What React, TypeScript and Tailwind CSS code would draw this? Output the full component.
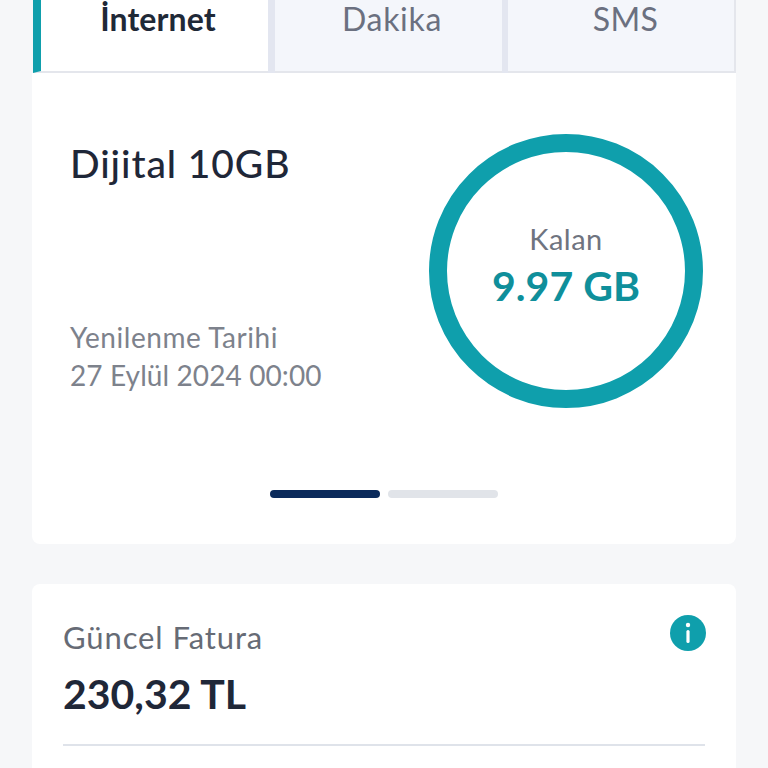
export default function App() {
  return (
    <div className="h-[768px] w-[768px] overflow-hidden bg-[#f6f7f9] px-8 font-['Lato','Inter',sans-serif]">
      {/* Tabs */}
      <div className="flex h-[73px] pl-px text-[32px] leading-[38px]">
        <div className="flex w-[235px] justify-center border-b-2 border-l-[8px] border-[#e4e6ec] border-l-[#0f9fac] bg-white pl-[7px] font-bold tracking-[0.1px] text-[#1f2937]">
          İnternet
        </div>
        <div className="w-[7px] bg-[#e3e6f0]" />
        <div className="flex w-[227px] justify-center border-b-2 border-[#e4e6ec] bg-[#f4f6fb] pl-[7px] tracking-[0.7px] text-[#6b7080]">
          Dakika
        </div>
        <div className="w-[6px] bg-[#e3e6f0]" />
        <div className="flex w-[228px] justify-center border-r-2 border-b-2 border-[#e4e6ec] bg-[#f4f6fb] pl-[9px] tracking-[0.4px] text-[#6b7080]">
          SMS
        </div>
      </div>

      {/* Paket */}
      <div className="h-[471px] rounded-b-lg bg-white">
        <div className="flex justify-between pr-[33px] pl-[38px]">
          <div>
            <h2 className="mt-[65px] text-[39px] leading-[50px] font-medium tracking-[0.9px] text-[#1f2738]">Dijital 10GB</h2>
            <div className="mt-[130px] text-[28px] leading-[38px] text-[#7d828c]">
              <p className="tracking-[0.55px]">Yenilenme Tarihi</p>
              <p className="tracking-[0.1px]">27 Eylül 2024 00:00</p>
            </div>
          </div>
          <div className="relative mt-[61px] h-[274px] w-[274px]">
            <svg viewBox="0 0 274 274" className="h-full w-full">
              <circle cx="137" cy="137" r="128" fill="none" stroke="#0f9fac" strokeWidth="18" />
            </svg>
            <div className="absolute inset-0 flex flex-col items-center pt-[87px]">
              <span className="text-[29px] leading-[36px] tracking-[0.5px] text-[#6f7480]">Kalan</span>
              <span className="mt-[4px] text-[41px] leading-[50px] font-bold text-[#0f8f9b]">9.97 GB</span>
            </div>
          </div>
        </div>
        <div className="mt-[82px] flex justify-center gap-[8px] pr-[1px]">
          <div className="h-2 w-[110px] rounded-sm bg-[#0b2a5b]" />
          <div className="h-2 w-[110px] rounded-sm bg-[#e1e4e9]" />
        </div>
      </div>

      {/* Fatura */}
      <div className="mt-10 h-[300px] rounded-t-lg bg-white pr-[30px] pl-[31px]">
        <div className="flex items-start justify-between pt-[31px]">
          <div className="mt-[2px]">
            <p className="text-[31px] leading-[40px] tracking-[0.9px] text-[#666b75]">Güncel Fatura</p>
            <p className="mt-[12px] text-[41px] leading-[50px] font-bold text-[#1f2738]">230,32 TL</p>
          </div>
          <svg viewBox="0 0 36 36" className="h-9 w-9">
            <circle cx="18" cy="18" r="18" fill="#0f9fac" />
            <circle cx="18" cy="10" r="2.2" fill="#fff" />
            <rect x="16.4" y="15" width="3.2" height="13" rx="1.6" fill="#fff" />
          </svg>
        </div>
        <div className="mt-[25px] mr-px h-0.5 bg-[#dfe3ea]" />
      </div>
    </div>
  );
}
